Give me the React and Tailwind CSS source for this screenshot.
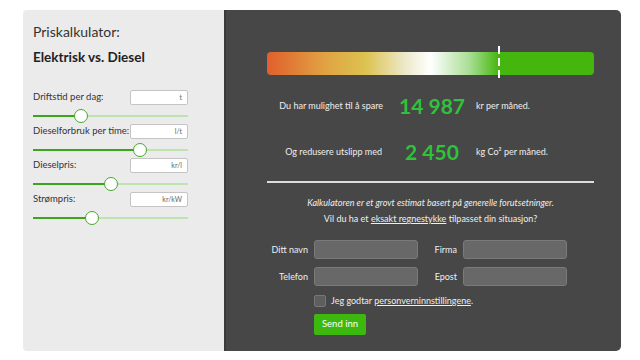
import React from "react";

const sliders = [
  { label: "Driftstid per dag:", unit: "t", pos: 48 },
  { label: "Dieselforbruk per time:", unit: "l/t", pos: 107 },
  { label: "Dieselpris:", unit: "kr/l", pos: 78 },
  { label: "Strømpris:", unit: "kr/kW", pos: 59 },
];

function Slider({ label, unit, pos }) {
  return (
    <div className="flex flex-col">
      <div className="flex items-center justify-between h-[15px]">
        <span className="text-[9.5px] text-[#333] whitespace-nowrap">{label}</span>
        <div className="shrink-0 w-[58px] h-[15px] bg-white border border-[#c4c4c4] rounded-[2px] flex items-center justify-end pr-[5px] text-[7px] text-[#666]">
          {unit}
        </div>
      </div>
      <div className="relative h-[17px] mt-[2px]">
        <div className="absolute left-0 right-0 top-[8px] h-[2px] bg-[#bfe3b0]" />
        <div className="absolute left-0 top-[8px] h-[2px] bg-[#3da51c]" style={{ width: pos }} />
        <div
          className="absolute top-[2px] w-[14px] h-[14px] rounded-full bg-white border-[1.5px] border-[#45a926]"
          style={{ left: pos - 7 }}
        />
      </div>
    </div>
  );
}

function Field({ label, labelW }) {
  return (
    <div className="flex items-center">
      <span className="text-[9px] text-[#eee] text-right mr-[6px] whitespace-nowrap" style={{ width: labelW }}>{label}</span>
      <div className="w-[104px] h-[19px] bg-[#686868] border border-[#7a7a7a] rounded-[3px]" />
    </div>
  );
}

export default function App() {
  return (
    <div className="w-[640px] h-[360px] bg-white" style={{ fontFamily: "Lato, 'Open Sans', sans-serif" }}>
      <div className="flex pl-[23px] pt-[10px]">
        <div className="w-[201px] h-[341px] bg-[#ebebeb] rounded-l-[4px] pl-[10px] pr-[36px] pt-[12px]">
          <div className="text-[14px] text-[#333] leading-[20px]">Priskalkulator:</div>
          <div className="text-[13.5px] font-bold text-[#222] leading-[20px] mt-[5px]">Elektrisk vs. Diesel</div>
          <div className="mt-[23px] flex flex-col">
            {sliders.map((s) => (
              <Slider key={s.label} {...s} />
            ))}
          </div>
        </div>
        <div className="w-[397px] h-[341px] bg-[#474747] rounded-r-[5px] border-l-2 border-[#3a3a3a] flex flex-col pt-[42px]">
          <div className="relative w-[327px] h-[23px] ml-[41px]">
            <div
              className="w-full h-full rounded-[4px]"
              style={{
                background:
                  "linear-gradient(to right, #e05f2c 0%, #e0a443 18%, #dcc24f 30%, #ece8c8 42%, #ffffff 50%, #a8de93 62%, #44b60d 71%, #44b60d 100%)",
              }}
            />
            <svg className="absolute left-[230px] top-[-6px]" width="4" height="35">
              <line x1="2" y1="0" x2="2" y2="35" stroke="#fff" strokeWidth="2" strokeDasharray="8 4" />
            </svg>
          </div>
          <div className="flex items-center mt-[18px] h-[26px] text-[#eee] whitespace-nowrap">
            <span className="text-[9px] w-[157px] text-right">Du har mulighet til å spare</span>
            <span className="text-[21px] font-bold text-[#2fc23a] ml-[16px] w-[77px]">14 987</span>
            <span className="text-[9px]">kr per måned.</span>
          </div>
          <div className="flex items-center mt-[20px] h-[26px] text-[#eee] whitespace-nowrap">
            <span className="text-[9px] w-[156px] text-right">Og redusere utslipp med</span>
            <span className="text-[21px] font-bold text-[#2fc23a] ml-[23px] w-[71px]">2 450</span>
            <span className="text-[9px]">kg Co² per måned.</span>
          </div>
          <div className="w-[327px] h-[2px] bg-[#dcdcdc] mt-[16px] ml-[41px]" />
          <div className="w-[409px] flex flex-col items-center">
            <div className="mt-[12px] text-[9px] italic text-[#eee] leading-[16px] whitespace-nowrap">
              Kalkulatoren er et grovt estimat basert på generelle forutsetninger.
            </div>
            <div className="text-[9px] text-[#eee] leading-[16px] whitespace-nowrap">
              Vil du ha et <span className="underline">eksakt regnestykke</span> tilpasset din situasjon?
            </div>
          </div>
          <div className="mt-[13px] flex flex-col ml-[40px]">
            <div className="flex gap-[15px]">
              <Field label="Ditt navn" labelW={42} />
              <Field label="Firma" labelW={24} />
            </div>
            <div className="flex gap-[15px] mt-[8px]">
              <Field label="Telefon" labelW={42} />
              <Field label="Epost" labelW={24} />
            </div>
            <div className="flex items-center ml-[48px] mt-[8px] h-[13px]">
              <div className="w-[12px] h-[12px] bg-[#5e5e5e] border border-[#777] rounded-[2px]" />
              <span className="text-[9px] text-[#eee] ml-[5px] whitespace-nowrap">
                Jeg godtar <span className="underline">personverninnstillingene</span>.
              </span>
            </div>
            <div className="ml-[48px] mt-[7px]">
              <div className="w-[52px] h-[21px] bg-[#3cb80e] rounded-[2px] flex items-center justify-center text-[9.5px] text-white">
                Send inn
              </div>
            </div>
          </div>
        </div>
      </div>
    </div>
  );
}
